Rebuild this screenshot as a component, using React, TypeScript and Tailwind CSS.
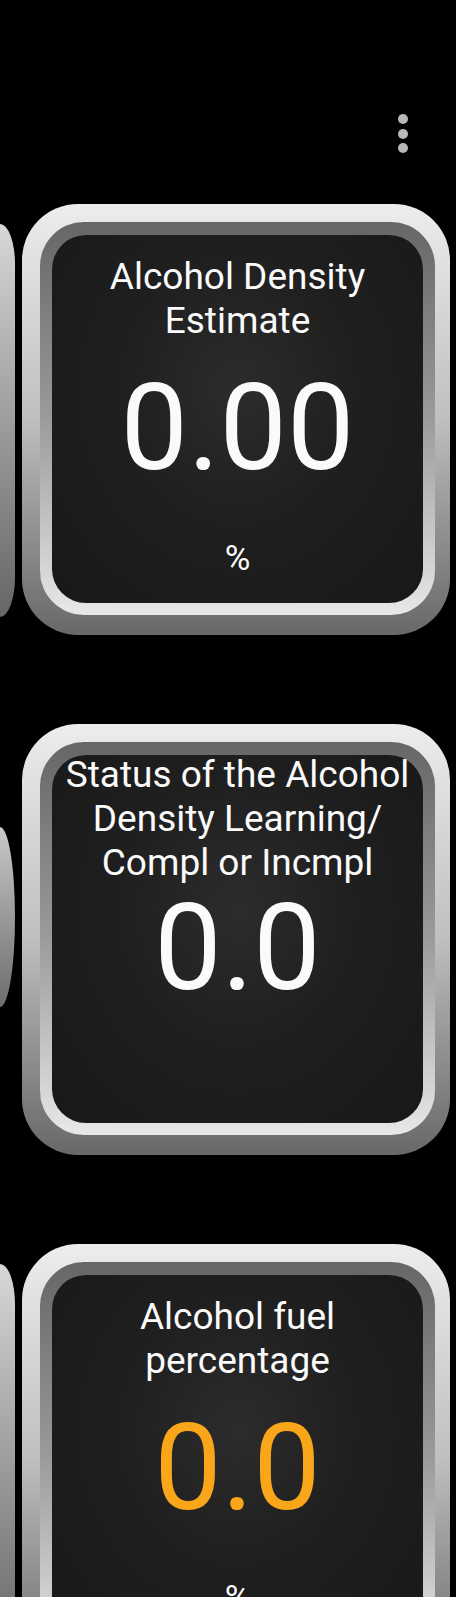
import React from 'react';

interface GaugeProps {
    title: string[]
    value: string
    unit?: string
    valueColor?: string
}

const Gauge: React.FC<GaugeProps> = ({title, value, unit, valueColor}) => {
    return (
        <div className="w-[428px] h-[431px] shrink-0 rounded-[56px] pl-[18px] pr-[15px] pt-[18px] pb-[20px] bg-gradient-to-b from-[#eceeeb] via-[#bdc0bd] to-[#686868]">
            <div className="h-full w-full rounded-[44px] pl-[12px] pr-[12px] pt-[13px] pb-[12px] bg-gradient-to-b from-[#666666] via-[#9a9c9a] to-[#e6e9e6]">
                <div className="h-full w-full rounded-[34px] flex flex-col items-center overflow-visible bg-[radial-gradient(ellipse_at_50%_42%,#2c2c2c_0%,#1f1f1f_45%,#181818_100%)]">
                    {/* Title */}
                    <div className="h-[128px] w-full flex flex-col items-center justify-center text-[37px] leading-[44px] text-[#fafafa]">
                        {title.map((line) => (
                            <span key={line} className="whitespace-nowrap">{line}</span>
                        ))}
                    </div>
                    <div className={`mt-[5px] text-[120px] leading-[120px] ${valueColor ?? 'text-[#fafafa]'}`}>
                        {value}
                    </div>
                    {unit && (
                        <div className="mt-[51px] text-[35px] leading-[40px] text-[#fafafa]">{unit}</div>
                    )}
                </div>
            </div>
        </div>
    )
}

const App: React.FC = () => {
    return (
        <div className="w-[456px] h-[1597px] overflow-hidden bg-black font-['Roboto',sans-serif]">
            {/* Overflow menu */}
            <div className="h-[204px] flex justify-end pr-[48px] pt-[114px]">
                <div className="flex flex-col gap-[4.5px]">
                    <span className="block h-[10px] w-[10px] rounded-full bg-[#b8b8b8]"/>
                    <span className="block h-[10px] w-[10px] rounded-full bg-[#b8b8b8]"/>
                    <span className="block h-[10px] w-[10px] rounded-full bg-[#b8b8b8]"/>
                </div>
            </div>

            <div className="flex flex-col gap-[89px]">
                <div className="flex items-start gap-[7px]">
                    <div className="mt-[20px] h-[393px] w-[15px] shrink-0 rounded-r-[15px_40px] bg-gradient-to-b from-[#d6d9d6] to-[#666666]"/>
                    <Gauge title={['Alcohol Density', 'Estimate']} value="0.00" unit="%"/>
                </div>

                <div className="flex items-start gap-[7px]">
                    <div className="mt-[103px] h-[180px] w-[15px] shrink-0 rounded-r-[15px_90px] bg-gradient-to-b from-[#c9cbc9] to-[#6c6c6c]"/>
                    <Gauge title={['Status of the Alcohol', 'Density Learning/', 'Compl or Incmpl']} value="0.0"/>
                </div>

                <div className="flex items-start gap-[7px]">
                    <div className="mt-[20px] h-[393px] w-[15px] shrink-0 rounded-r-[15px_40px] bg-gradient-to-b from-[#d6d9d6] to-[#666666]"/>
                    <Gauge title={['Alcohol fuel', 'percentage']} value="0.0" unit="%" valueColor="text-[#f9a61a]"/>
                </div>
            </div>
        </div>
    );
};

export default App;
